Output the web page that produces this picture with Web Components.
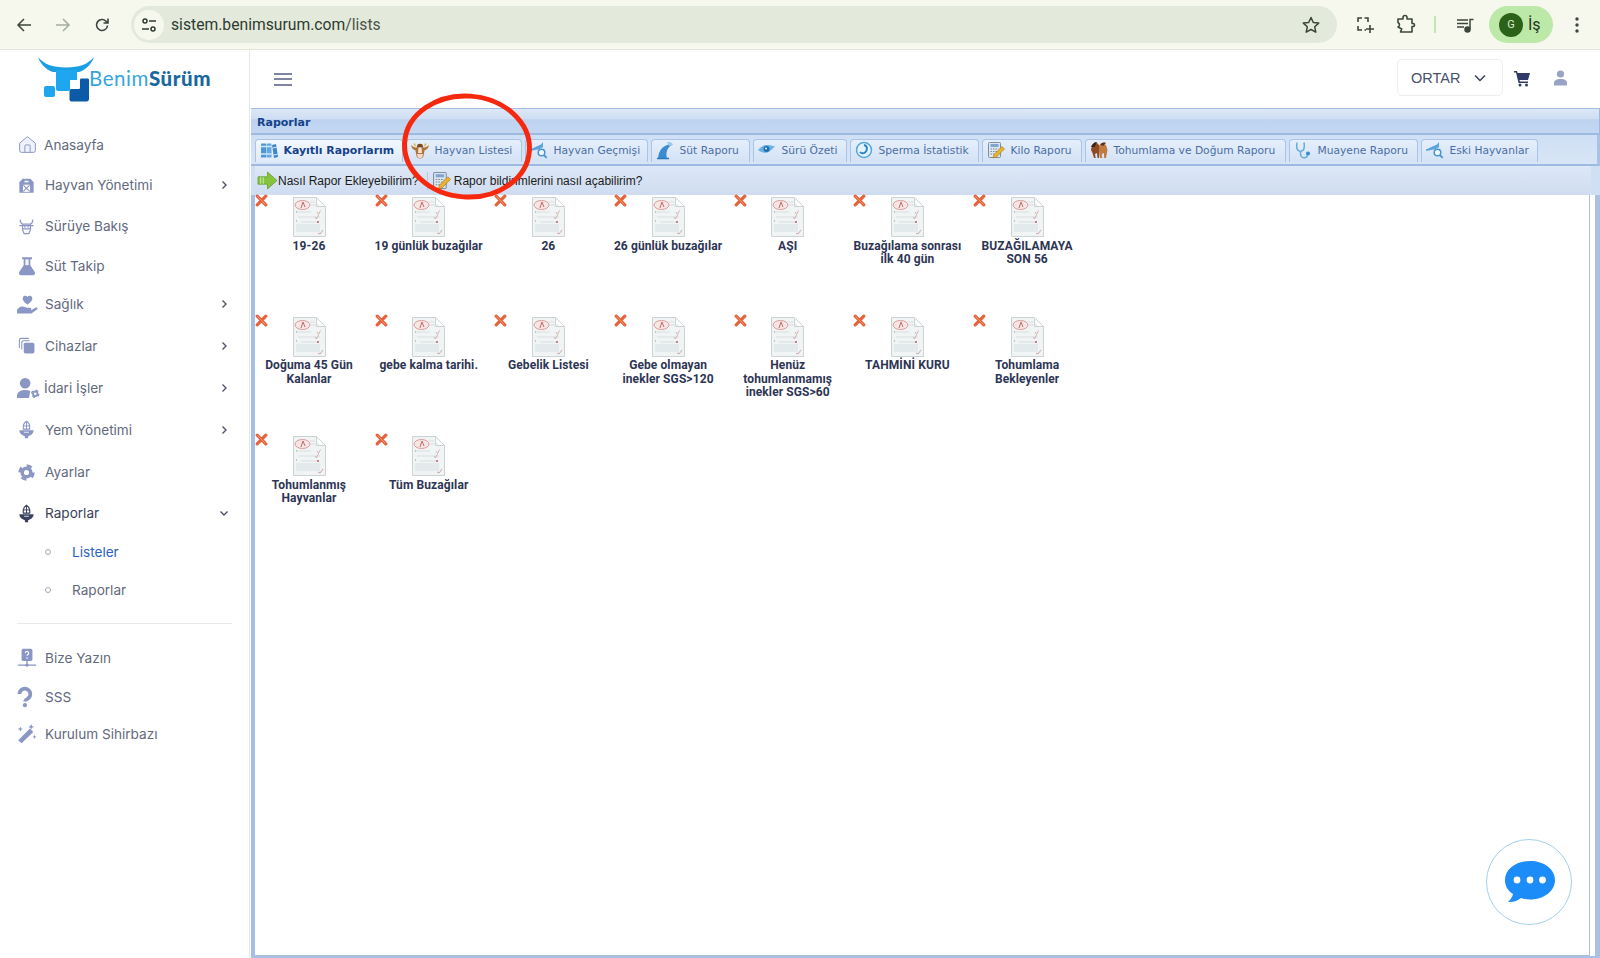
<!DOCTYPE html>
<html lang="tr"><head><meta charset="utf-8"><title>Raporlar</title>
<style>
html,body{margin:0;padding:0;height:958px;overflow:hidden;background:#fff}
body{font-family:"Inter","Liberation Sans",sans-serif}
app-shell{height:958px}
</style></head><body>
<app-shell>
  <browser-bar></browser-bar>
  <side-nav slot="side">
    <nav-row icon="home" label="Anasayfa" top="0" tx="-1"></nav-row>
    <nav-row icon="barn" label="Hayvan Yönetimi" top="20.9" chev="right"></nav-row>
    <nav-row icon="cow" label="Sürüye Bakış" top="21"></nav-row>
    <nav-row icon="flask" label="Süt Takip" top="19.4"></nav-row>
    <nav-row icon="hand" label="Sağlık" top="18.5" chev="right"></nav-row>
    <nav-row icon="copy" label="Cihazlar" top="21.7" chev="right"></nav-row>
    <nav-row icon="usergear" label="İdari İşler" top="22.3" chev="right" tx="-1"></nav-row>
    <nav-row icon="feed" label="Yem Yönetimi" top="21.7" chev="right"></nav-row>
    <nav-row icon="gear" label="Ayarlar" top="22.3"></nav-row>
    <nav-row icon="report" label="Raporlar" top="21" chev="down" state="open"></nav-row>
    <nav-row sub label="Listeler" top="19" state="current"></nav-row>
    <nav-row sub label="Raporlar" top="17.3"></nav-row>
    <nav-rule></nav-rule>
    <nav-row icon="support" label="Bize Yazın"></nav-row>
    <nav-row icon="help" label="SSS" top="19"></nav-row>
    <nav-row icon="wand" label="Kurulum Sihirbazı" top="16.6"></nav-row>
  </side-nav>
  <top-bar slot="main"></top-bar>
  <report-panel slot="main" heading="Raporlar">
    <rep-tab slot="tabs" w="148" icon="books" label="Kayıtlı Raporlarım" active></rep-tab>
    <rep-tab slot="tabs" w="116" icon="cowface" label="Hayvan Listesi"></rep-tab>
    <rep-tab slot="tabs" w="123" icon="search" label="Hayvan Geçmişi"></rep-tab>
    <rep-tab slot="tabs" w="99" icon="tap" label="Süt Raporu"></rep-tab>
    <rep-tab slot="tabs" w="94" icon="eye" label="Sürü Özeti"></rep-tab>
    <rep-tab slot="tabs" w="129" icon="spiral" label="Sperma İstatistik"></rep-tab>
    <rep-tab slot="tabs" w="100" icon="calc" label="Kilo Raporu"></rep-tab>
    <rep-tab slot="tabs" w="201" icon="horses" label="Tohumlama ve Doğum Raporu"></rep-tab>
    <rep-tab slot="tabs" w="129" icon="scope" label="Muayene Raporu"></rep-tab>
    <rep-tab slot="tabs" w="117" icon="search" label="Eski Hayvanlar"></rep-tab>
    <tool-link slot="tools" icon="arrow" label="Nasıl Rapor Ekleyebilirim?"></tool-link>
    <tool-link slot="tools" icon="calc" label="Rapor bildirimlerini nasıl açabilirim?" sep></tool-link>
    <rep-card label="19-26"></rep-card>
    <rep-card label="19 günlük buzağılar"></rep-card>
    <rep-card label="26"></rep-card>
    <rep-card label="26 günlük buzağılar"></rep-card>
    <rep-card label="AŞI"></rep-card>
    <rep-card label="Buzağılama sonrası ilk 40 gün"></rep-card>
    <rep-card label="BUZAĞILAMAYA SON 56"></rep-card>
    <rep-card label="Doğuma 45 Gün Kalanlar"></rep-card>
    <rep-card label="gebe kalma tarihi."></rep-card>
    <rep-card label="Gebelik Listesi"></rep-card>
    <rep-card label="Gebe olmayan inekler SGS&gt;120"></rep-card>
    <rep-card label="Henüz tohumlanmamış inekler SGS&gt;60"></rep-card>
    <rep-card label="TAHMİNİ KURU"></rep-card>
    <rep-card label="Tohumlama Bekleyenler"></rep-card>
    <rep-card label="Tohumlanmış Hayvanlar"></rep-card>
    <rep-card label="Tüm Buzağılar"></rep-card>
  </report-panel>
  <chat-fab slot="over"></chat-fab>
  <mark-ring slot="over"></mark-ring>
</app-shell>
<script>
const C='#8a96c4';
const gear=(x,y,r,c)=>`<circle cx="${x}" cy="${y}" r="${r*.62}" fill="none" stroke="${c}" stroke-width="${r*.5}"/><circle cx="${x}" cy="${y}" r="${r}" fill="none" stroke="${c}" stroke-width="${r*.36}" stroke-dasharray="${r*.78} ${r*.79}"/>`;
const SZ={home:21,barn:19,cow:19,flask:20,hand:21,copy:19,usergear:23,feed:19,gear:19,report:19,support:20,help:20,wand:20};
const NAV={
home:`<path d="M3 10.5 12 3l9 7.5V19a2 2 0 0 1-2 2H5a2 2 0 0 1-2-2z" fill="#f0f2f9" stroke="${C}" stroke-width="1.1"/><path d="M9 21v-7.5a1 1 0 0 1 1-1h4a1 1 0 0 1 1 1V21" fill="none" stroke="${C}" stroke-width="1.1"/>`,
barn:`<path d="M3 8l4-4.5h10L21 8v13H3z" fill="${C}"/><rect x="9.5" y="6" width="5" height="2" fill="#fff"/><rect x="7.5" y="11" width="9" height="9" fill="#fff"/><path d="M8 11.5l8 8m0-8l-8 8" stroke="${C}" stroke-width="1.3"/>`,
cow:`<path d="M4 3c0 4 2.500 6 5 6h6c2.500 0 5-2 5-6M3 11h18M7 9v7l2 5h6l2-5V9M7 15h10" fill="none" stroke="${C}" stroke-width="1.5"/><circle cx="10" cy="12.500" r="1" fill="${C}"/><circle cx="14" cy="12.500" r="1" fill="${C}"/>`,
flask:`<path d="M6 1.500h12v2.500h-2v7l5.500 8.500A2.500 2.500 0 0 1 19 23H5a2.500 2.500 0 0 1-2.500-3.500L8 11V4H6z" fill="${C}"/><path d="M10 4h4v7h-4z" fill="#fff" opacity=".9"/>`,
hand:`<path d="M12 12S6.500 8.500 6.500 5A3 3 0 0 1 12 3.300 3 3 0 0 1 17.500 5C17.500 8.500 12 12 12 12z" fill="${C}"/><path d="M0 18c2-3 5-4.500 7.500-3.500l4 1.200h3.500a1.300 1.300 0 0 1 0 2.800h-4.500 5.500l5.500-3c1.800-.8 2.800 1 1.300 2.200l-6.300 4.600H0z" fill="${C}"/>`,
copy:`<rect x="8.500" y="8.500" width="13.500" height="13.500" rx="2" fill="${C}"/><path d="M3 15V5a2 2 0 0 1 2-2h10M6 17V8a2 2 0 0 1 2-2h8" fill="none" stroke="${C}" stroke-width="1.300"/>`,
usergear:`<circle cx="8.500" cy="6.500" r="5.500" fill="${C}"/><path d="M0 22v-2.500C0 15.500 4 13.500 8.500 13.500c2 0 3.800.3 5.300 1l-1.300 7.500z" fill="${C}"/>${gear(19,17.500,3.800,C)}`,
feed:`<path d="M3 13h18c0 4.500-4.500 7-7 7.500V23h-4v-2.500C7.500 20 3 17.500 3 13z" fill="${C}"/><path d="M12 1.500c3.500 2 4.500 6 4 10h-8c-.5-4 .5-8 4-10z" fill="none" stroke="${C}" stroke-width="1.500"/><path d="M12 2v10M8.500 7.500h7" stroke="${C}" stroke-width="1.200"/><path d="M9 15.500h6" stroke="#fff" stroke-width="1"/>`,
gear:gear(12,12,8.800,C),
report:`<path d="M3 13h18c0 4.500-4.500 7-7 7.500V23h-4v-2.500C7.500 20 3 17.500 3 13z" fill="#3b4260"/><path d="M12 1.500c3.500 2 4.500 6 4 10h-8c-.5-4 .5-8 4-10z" fill="none" stroke="#3b4260" stroke-width="1.500"/><path d="M12 2v10M8.500 7.500h7" stroke="#3b4260" stroke-width="1.200"/><path d="M9 15.500h6" stroke="#fff" stroke-width="1"/>`,
support:`<rect x="5.500" y="1" width="13" height="14.500" rx="2" fill="${C}"/><path d="M10 6a2 2 0 1 1 3 1.800c-.7.400-1 .8-1 1.600" fill="none" stroke="#fff" stroke-width="1.400"/><circle cx="12" cy="12" r=".9" fill="#fff"/><path d="M12 15v5M1 20.500h22" stroke="${C}" stroke-width="1.600"/><circle cx="12" cy="20.500" r="2" fill="${C}"/>`,
help:`<path d="M3 8.500a6.500 6.500 0 1 1 10 5.500c-2.500 1.500-3.500 2-3.500 3.500" fill="none" stroke="${C}" stroke-width="4.400"/><circle cx="9.500" cy="21.800" r="2.500" fill="${C}"/>`,
wand:`<path d="M1.500 19.500 15.500 5.500l4 4L5.500 23z" fill="${C}"/><path d="M17 0l1 2.500 2.500 1-2.500 1-1 2.500-1-2.500-2.500-1 2.500-1zM4 3l.8 2.200L7 6l-2.200.8L4 9l-.8-2.200L1 6l2.200-.8zM21 13l.7 1.800 1.800.7-1.800.7-.7 1.800-.7-1.800-1.800-.7 1.800-.7z" fill="${C}"/>`
};
const TAB={
books:`<rect x="1" y="2.500" width="5" height="14" rx=".6" fill="#4f96d8"/><rect x="6.500" y="2.500" width="5" height="14" rx=".6" fill="#62a6e2"/><path d="M12 4l4-1 2 13-4 1z" fill="#3f87cb"/><path d="M1 5.500h10.500M1 13h10.500" stroke="#cfe8fb" stroke-width="1.300"/><path d="M12.500 7l4-.8M13.500 14l4-.8" stroke="#cfe8fb" stroke-width="1.100"/>`,
cowface:`<path d="M0 4c2 2 4 2.500 6 2.500h6c2 0 4-.5 6-2.500-.3 3-2.500 5-4.500 5.500l-1 5.500c-.3 1.500-1.500 2.500-3.500 2.500s-3.200-1-3.500-2.500l-1-5.500C2.500 9 .3 7 0 4z" fill="#b0743a"/><path d="M6.500 3.500c1.500-1 3.500-1 5 0l.8 3h-6.600z" fill="#7c4a1e"/><path d="M7.500 6.500h3L11 12H7z" fill="#f2e3cc"/><path d="M6 13h6l-.6 3c-.8 1.300-4 1.300-4.800 0z" fill="#f4d9c6"/><path d="M3 2.500l1.500 2.500M15 2.500L13.500 5" stroke="#e0b94f" stroke-width="1.500"/>`,
search:`<path d="M0 8.500 11 3.500l2-2.500v5L9 8.200 0 10z" fill="#5aa3de"/><circle cx="11.500" cy="11.500" r="3.300" fill="#eef7fc" stroke="#4e93cb" stroke-width="1.500"/><path d="M13.800 14l2.900 2.900" stroke="#4e93cb" stroke-width="1.800"/>`,
tap:`<path d="M2 17.500c.5-6 3-11 8-13 2-.8 5-1.500 6.500-1-1 .8-3.500 2-4.500 4-2 3.500-2 6-1 10z" fill="#3a8bd0"/><path d="M11 1.500c2.500-1 5.500 0 6 2.500l-4 1z" fill="#9ccbe9"/><path d="M1 17.500h12" stroke="#2a79bf" stroke-width="1.500"/>`,
eye:`<path d="M0 9c3-3.500 6-5 9.500-5 3.500 0 6 1.500 8 1.500-2 .5-3.500 4-8 6C6 12.500 2.500 11 0 9z" fill="#6bb2e3"/><circle cx="8.500" cy="8" r="3" fill="#1d6eb3"/><circle cx="8" cy="7.500" r="1" fill="#e7f5fd"/>`,
spiral:`<circle cx="9" cy="9" r="7.500" fill="#e5f3fb" stroke="#56a6da" stroke-width="1.500"/><path d="M9 4c4 1 3.500 5.500 1 7.500-2 1.300-4.200.6-5-.5" fill="none" stroke="#2a85c7" stroke-width="2"/>`,
calc:`<rect x="1.500" y="1.500" width="12" height="15" rx="1" fill="#dfe6ee" stroke="#7c8ea6"/><rect x="3.500" y="3" width="8" height="3" fill="#7fa6cf"/><path d="M3.500 8h8M3.500 10.500h8M3.500 13h5" stroke="#7b8799" stroke-dasharray="1.500 1"/><path d="M6 17l1-3.500L15 5.500l2.500 2.500-8 8z" fill="#e9b233" stroke="#a67912" stroke-width=".6"/>`,
horses:`<path d="M1 9c.5-4 3-7 6-7l3 3-1 12H7.500L7 12 5 13l.7 4H4L2.500 12z" fill="#8c4b22"/><path d="M9 5c2-2.500 5-2.500 7-1l1.500 5-1.500 8h-1.800l-.4-5-2 1 .4 4H10z" fill="#c17a3f"/><path d="M1 6c1-3 3-5 6-5L4.500 6z" fill="#3d220f"/><path d="M10 3.500c2-2 4-2.500 6-1.500l-3 3z" fill="#5c3214"/>`,
scope:`<path d="M3 1.500C2 7 3 10 6.500 10.500 10 10 11 7 10 1.500M6.500 10.500V13c0 3 2.500 4.500 5 3.500 1.200-.5 2-1.500 2-2.500" fill="none" stroke="#65abd9" stroke-width="1.500"/><circle cx="14" cy="12.500" r="2" fill="#3a8bcb"/>`,
arrow:`<path d="M0 5.500h9V1l9 8-9 8v-4.500H0z" fill="#86c440" stroke="#5e9c22" stroke-width=".7"/><path d="M2.500 6v6M5 6v6" stroke="#c3e59b"/>`
};
const svg=(body,s,vb=24)=>`<svg xmlns="http://www.w3.org/2000/svg" width="${s}" height="${s}" viewBox="0 0 ${vb} ${vb}" style="display:block;overflow:visible;flex:none">${body}</svg>`;
const tpl=html=>{const t=document.createElement('template');t.innerHTML=html;return t};
function el(name,html,init){
  const t=tpl(html);
  customElements.define(name,class extends HTMLElement{
    constructor(){super();this.attachShadow({mode:'open'}).appendChild(t.content.cloneNode(true))}
    connectedCallback(){if(init&&!this._i){this._i=1;init.call(this,this.shadowRoot)}}
  });
}
el('app-shell',`<style>
:host{display:flex;flex-direction:column;position:relative;overflow:hidden;width:1600px}
.hold{display:flex;flex:1;min-height:0}
.side{width:249px;flex:none;border-right:1px solid #dfe9f2}
.main{flex:1;min-width:0;display:flex;flex-direction:column}
</style><slot></slot><div class="hold"><div class="side"><slot name="side"></slot></div><div class="main"><slot name="main"></slot></div></div><slot name="over"></slot>`);
el('browser-bar',`<style>
:host{display:flex;align-items:center;height:49px;border-bottom:1px solid #e3e5dc;background:#f6f8ee;color:#3c463a;box-sizing:content-box;font-family:"Liberation Sans",sans-serif}
button{all:unset;display:flex;align-items:center;justify-content:center}
.nav{width:18px;height:18px}
.pill{margin-left:20px;width:1206px;height:37px;border-radius:19px;background:#e3eadb;display:flex;align-items:center;box-sizing:border-box;padding:0 16px 0 3px}
.site{width:30px;height:30px;border-radius:50%;background:#f6f8ee;display:flex;align-items:center;justify-content:center;margin-right:7px}
.url{font:15.700px "Roboto","Liberation Sans",sans-serif;color:#2f3a30;flex:1}
.url i{font-style:normal;color:#4b554a}
.pro{margin-left:14px;width:64px;height:37px;border-radius:19px;background:#bce8a8;display:flex;align-items:center;box-sizing:border-box;padding-left:10px;gap:5px}
.pro b{width:24px;height:24px;border-radius:50%;background:#2c6119;color:#d8efd0;font:400 11px "Roboto",sans-serif;display:flex;align-items:center;justify-content:center}
.pro span{font:16px "Roboto",sans-serif;color:#263322}
.sep{width:2px;height:16px;background:#c6e3b4}
</style>
<button class="nav" style="margin-left:15px"><svg width="18" height="18" viewBox="0 0 18 18" fill="none" stroke="#3c463a" stroke-width="1.500"><path d="M16 9H3M9 3 3 9l6 6"/></svg></button>
<button class="nav" style="margin-left:21px"><svg width="18" height="18" viewBox="0 0 18 18" fill="none" stroke="#a4aca2" stroke-width="1.500"><path d="M2 9h13M9 3l6 6-6 6"/></svg></button>
<button class="nav" style="margin-left:21px"><svg width="18" height="18" viewBox="0 0 18 18" fill="none" stroke="#3c463a" stroke-width="1.600"><path d="M14.500 9.500a5.500 5.500 0 1 1-1.500-4.300L15 7M15 2.500V7h-4.500"/></svg></button>
<div class="pill"><span class="site"><svg width="18" height="18" viewBox="0 0 18 18" fill="none" stroke="#2f3a30" stroke-width="1.500"><circle cx="5" cy="5" r="2"/><path d="M9 5h7M2 13h7"/><circle cx="13" cy="13" r="2"/></svg></span>
<span class="url">sistem.benimsurum.com<i>/lists</i></span>
<svg width="20" height="20" viewBox="0 0 20 20" fill="none" stroke="#3c463a" stroke-width="1.500" stroke-linejoin="round"><path d="M10 2.500l2.300 5 5.400.6-4 3.700 1.100 5.400L10 14.500l-4.800 2.700 1.100-5.400-4-3.700 5.400-.6z"/></svg></div>
<button style="margin-left:18px;width:20px;height:20px"><svg width="20" height="20" viewBox="0 0 20 20" fill="none" stroke="#3c463a" stroke-width="1.600"><path d="M7 3H3v4M3 11v4h4M13 7V3H9.500M11 15H9.500M15 10v8M11 14h8"/></svg></button>
<button style="margin-left:20px;width:22px;height:22px"><svg width="22" height="22" viewBox="0 0 22 22" fill="none" stroke="#3c463a" stroke-width="1.600" stroke-linejoin="round"><path d="M3 5h5V3.500a2 2 0 0 1 4 0V5h5v4.500h1a1.500 1.500 0 0 1 0 3h-1V18H5.500l1.200-3L3 13c2-1 2-3.500 0-4.500z"/></svg></button>
<span class="sep" style="margin-left:17px;height:17px"></span>
<button style="margin-left:19px;width:20px;height:20px"><svg width="20" height="20" viewBox="0 0 20 20" fill="none" stroke="#3c463a" stroke-width="1.500"><path d="M2 5h11M2 8.500h11M2 12h7M15 14V4.500h3.500"/><circle cx="12.500" cy="14.500" r="2.500" fill="#3c463a"/></svg></button>
<div class="pro"><b>G</b><span>İş</span></div>
<button style="margin-left:15px;width:18px;height:20px"><svg width="18" height="20" viewBox="0 0 18 20" fill="#3c463a"><circle cx="9" cy="4" r="1.700"/><circle cx="9" cy="10" r="1.700"/><circle cx="9" cy="16" r="1.700"/></svg></button>
`);
el('side-nav',`<style>
:host{display:block;background:#fff}
.logo{height:84.500px;padding:6px 0 0 38px;box-sizing:border-box;display:flex;align-items:flex-start}
.word{font:20.500px "Lato","Liberation Sans",sans-serif;margin:9px 0 0 -5px;letter-spacing:.55px;line-height:26px;color:#35a6dc}
.word b{color:#17689f;font-weight:900}
</style>
<div class="logo"><svg width="56" height="46" viewBox="0 0 56 46" style="flex:none"><path d="M0 1C6 8 14 11.500 28 11.500S50 8 56 1c-3 9-11 14-15 15H15C11 15 3 10 0 1z" fill="#1b9fe4"/><path d="M18 14h21v10h-7v9c0 1-1 2-2 2H20c-1 0-2-1-2-2z" fill="#1ea6ee"/><rect x="6" y="30" width="11" height="11" rx="2" fill="#1ea6ee"/><path d="M33 33h7.500c1 0 1.500-.5 1.500-1.500V24c0-1 .5-1.500 1.500-1.500h6c1 0 1.500.5 1.500 1.500v19c0 1.500-1 2.500-2.500 2.500H33.500c-1 0-2-1-2-2V35c0-1 .5-2 1.500-2z" fill="#0b5ba9"/></svg>
<div class="word">Benim<b>Sürüm</b></div></div>
<slot></slot>`);
el('nav-row',`<style>
:host{display:flex;align-items:center;height:20px;padding-left:18px;padding-right:18px;font:13.600px "Inter","Liberation Sans",sans-serif;color:#636a7d}
:host([state=open]){color:#3a4159}
:host([state=current]){color:#2c62bd}
.ic{flex:none;display:flex;align-items:center;margin-left:-1px;padding-right:1px;box-sizing:border-box;width:28px}
:host([sub]) .ic{width:55px;padding-left:27.500px;padding-right:0}
.dot{width:6px;height:6px;border-radius:50%;border:1px solid #a6abba;box-sizing:border-box}
.lb{flex:1;white-space:nowrap}
</style><span class="ic"></span><span class="lb"></span><span class="ch"></span>`,function(r){
  const a=n=>this.getAttribute(n);
  if(a('top'))this.style.marginTop=a('top')+'px';
  const l=r.querySelector('.lb');l.textContent=a('label');
  if(a('tx'))l.style.marginLeft=a('tx')+'px';
  r.querySelector('.ic').innerHTML=this.hasAttribute('sub')?'<span class="dot"></span>':svg(NAV[a('icon')]||'',SZ[a('icon')]||19);
  const ch=a('chev');
  if(ch)r.querySelector('.ch').innerHTML=`<svg width="14" height="14" viewBox="0 0 14 14" fill="none" stroke="#4e5568" stroke-width="1.400" style="display:block;margin-left:-1px"><path d="${ch==='down'?'M3.500 5.500 7 9l3.500-3.500':'M5.500 3.500 9 7l-3.500 3.500'}"/></svg>`;
});
el('nav-rule',`<style>:host{display:block;height:1px;background:#e8e9ed;margin:23px 17px 24.400px 17px}</style>`);
el('top-bar',`<style>
:host{display:flex;align-items:center;height:58px;background:#fff;padding-right:32px;box-sizing:border-box}
.burger{margin-left:24px;width:18px;height:13px;border-top:2px solid #7e84a1;border-bottom:2px solid #7e84a1;position:relative;box-sizing:border-box}
.burger::after{content:"";position:absolute;left:0;right:0;top:3.500px;height:2px;background:#7e84a1}
.sel{margin-left:auto;width:106px;height:37px;border:1px solid #eceef2;border-radius:5px;box-sizing:border-box;display:flex;align-items:center;padding:0 15px 0 13px;justify-content:space-between;font:14.500px "Liberation Sans",sans-serif;color:#4a516b;margin-top:-3px}
</style><div class="burger"></div>
<div class="sel"><span>ORTAR</span><svg width="14" height="14" viewBox="0 0 14 14" fill="none" stroke="#3a4159" stroke-width="1.500"><path d="M2 4.500 7 9.500l5-5"/></svg></div>
<svg style="margin-left:10px;margin-top:-3px" width="18" height="18" viewBox="0 0 18 18" fill="#2f3a68"><path d="M1 2h3l.6 2H17l-2 7H6.500l.3 1.500H15V14H5.500L3 3.500H1z"/><circle cx="7" cy="16" r="1.500"/><circle cx="13.500" cy="16" r="1.500"/></svg>
<svg style="margin-left:22px;margin-top:-3px" width="15" height="16" viewBox="0 0 15 16" fill="#99a3c8"><circle cx="7.500" cy="4" r="3.600"/><path d="M1 15.500v-2.500c0-2.500 2.500-4 6.500-4s6.500 1.500 6.500 4v2.500z"/></svg>`);
el('report-panel',`<style>
:host{display:flex;flex-direction:column;flex:1;min-height:0;margin-left:1px;font-family:"Liberation Sans",sans-serif;border-top:1px solid #a4bedf;border-bottom:2px solid #a9c2e4;box-sizing:border-box;background:#cfdff4}
.head{height:26px;flex:none;background:linear-gradient(#dce7f6 0,#cfdff4 40%,#bcd2ef 45%,#c4d8f2 100%);border-bottom:2px solid #9dbbe2;border-right:1px solid #9dbbe2;box-sizing:border-box;padding-left:6px;display:flex;align-items:center;font:bold 11px "DejaVu Sans",sans-serif;color:#15428b;padding-top:2px}
.tabs{height:31px;flex:none;box-sizing:border-box;display:flex;gap:3px;padding:3px 0 0 4px;background:linear-gradient(#cfdff5,#d8e5f6);border-bottom:2px solid #9dbbe2;border-right:3px solid #a9c2e4}
.tools{height:29px;flex:none;margin-left:4px;margin-right:9px;display:flex;align-items:center;background:linear-gradient(#dde8f7,#cfdcf0);padding-left:3px}
.wrap{flex:1;min-height:0;display:flex;background:#fff;border-left:4px solid #a3bfe6;border-right:5px solid #a9c2e4}
.body{flex:1;background:#fff;border-right:1px solid #aabfdb;border-bottom:1px solid #aabfdb;box-sizing:border-box;display:grid;grid-template-columns:repeat(7,119.700px);grid-auto-rows:119.700px;align-content:start;margin-right:5px}
</style><div class="head"></div><div class="tabs"><slot name="tabs"></slot></div><div class="tools"><slot name="tools"></slot></div><div class="wrap"><div class="body"><slot></slot></div></div>`,function(r){r.querySelector('.head').textContent=this.getAttribute('heading')});
el('rep-tab',`<style>
:host{display:flex;align-items:center;height:23px;box-sizing:border-box;border:1px solid #a9c4e6;border-bottom:0;border-radius:4px 4px 0 0;background:linear-gradient(#e6effb,#d3e2f6);font:10.700px "DejaVu Sans",sans-serif;color:#4a6ea3;padding:0 0 2px 4px;white-space:nowrap;overflow:hidden;margin-top:1px}
:host([active]){background:linear-gradient(#f3f8fe,#dfeafa);color:#15428b;font-weight:bold;font-size:10.900px}
.i{width:23.500px;flex:none}
</style><span class="i"></span><span class="t"></span>`,function(r){
  this.style.width=this.getAttribute('w')+'px';
  r.querySelector('.i').innerHTML=svg(TAB[this.getAttribute('icon')]||'',18,18);
  r.querySelector('.t').textContent=this.getAttribute('label');
});
el('tool-link',`<style>
:host{display:flex;align-items:center;font:12px "Liberation Sans",sans-serif;color:#1b1b1b;white-space:nowrap}
.s{width:1px;height:18px;background:#b7c8df;margin:0 4px 0 8px}
.i{width:20px;flex:none}
:host([sep]) .i{width:22px}
</style><span class="s" hidden></span><span class="i"></span><span class="t"></span>`,function(r){
  if(this.hasAttribute('sep'))r.querySelector('.s').hidden=false;
  r.querySelector('.i').innerHTML=svg(TAB[this.getAttribute('icon')],19,18);
  r.querySelector('.t').textContent=this.getAttribute('label');
});
const DOC=`<svg width="33" height="40" viewBox="0 0 33 40" style="display:block"><path d="M.5.500h23l9 9v30H.5z" fill="#f1f4f4" stroke="#ccd3d5"/><path d="M23.500.500v9h9z" fill="#fbfcfc" stroke="#ccd3d5"/><ellipse cx="9.500" cy="8" rx="7.500" ry="4.500" fill="#f7e6e6" stroke="#dc9c9c"/><path d="M8 11l2-6 2 5" fill="none" stroke="#c26a6a"/><path d="M17 5h5M18 8h8M4 15h14M5 20h22M8 25h18" stroke="#d8dee0"/><path d="M24 15l1.500 2.500 2-4M22 20l1.500 2 2-4" fill="none" stroke="#cda4a4" stroke-width=".8"/><path d="M3 15h1M3 24h1M3 33h1" stroke="#8e999d"/><rect x="3" y="27" width="24" height="8" fill="#e2eaec"/><path d="M24 24l2 2m0-2l-2 2" stroke="#c98088"/><path d="M25 36l2 1 3-4" fill="none" stroke="#cda4a4"/></svg>`;
el('rep-card',`<style>
:host{display:block;position:relative;width:119.700px;height:119.700px;box-sizing:border-box}
.x{position:absolute;left:0;top:-1px}
.in{width:112px;margin-left:-2px;display:flex;flex-direction:column;align-items:center;padding-top:2px;text-align:center;font:bold 12px/13.500px "Roboto","Liberation Sans",sans-serif;color:#2d3554;letter-spacing:.1px}
.t{margin-top:2.500px}
</style><svg class="x" width="13" height="13" viewBox="0 0 13 13"><path d="M2.200 2.200l8.600 8.600M10.800 2.200l-8.600 8.600" stroke="#e7613a" stroke-width="3.200" stroke-linecap="round"/><path d="M2.500 2.500l8 8" stroke="#f3a07e" stroke-width=".8"/></svg><div class="in">${DOC}<div class="t"></div></div>`,function(r){r.querySelector('.t').textContent=this.getAttribute('label')});
el('chat-fab',`<style>:host{display:block;position:absolute;left:1486px;top:839px;width:86px;height:86px;box-sizing:border-box;border:1px solid #a5d0ea;border-radius:50%;background:#fff}
svg{position:absolute;left:18px;top:20px}</style>
<svg width="50" height="44" viewBox="0 0 50 44"><path d="M25 1C11 1 0 9 0 20c0 6 3 11 8 14-1 4-3 6-5 8 5 .5 10-1.500 13-4 3 1 6 1.500 9 1.500 14 0 25-8.500 25-19.500S39 1 25 1z" fill="#1b8cf8"/><circle cx="12" cy="20" r="3.400" fill="#fff"/><circle cx="25" cy="20" r="3.400" fill="#fff"/><circle cx="37.500" cy="20" r="3.400" fill="#fff"/></svg>`);
el('mark-ring',`<style>:host{display:block;position:absolute;left:399px;top:91px;width:136px;height:112px;pointer-events:none}</style>
<svg width="136" height="112" viewBox="0 0 136 112"><ellipse cx="68" cy="55.500" rx="62.500" ry="50.500" transform="rotate(4 68 55.500)" fill="none" stroke="#f6290f" stroke-width="5"/></svg>`);
</script>
</body></html>
